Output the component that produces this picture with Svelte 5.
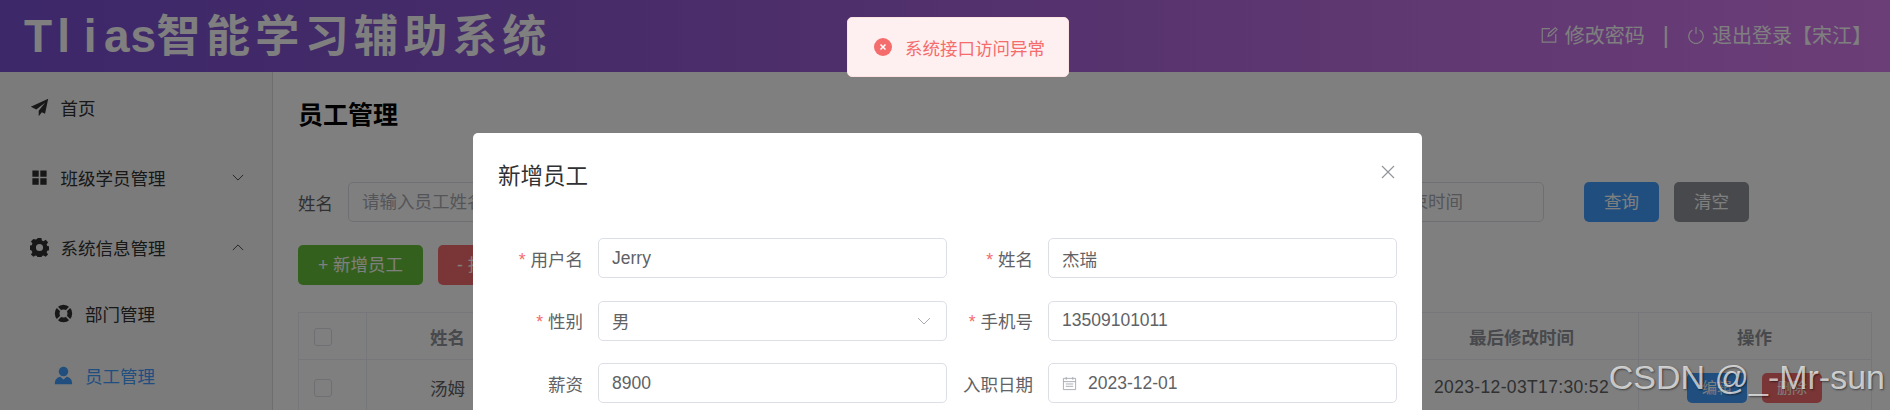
<script>
  const subMenu = [
    { label: "部门管理", icon: "help" },
    { label: "员工管理", icon: "avatar", active: true }
  ];
  const formRows = [
    { label: "用户名", required: true, value: "Jerry" },
    { label: "姓名", required: true, value: "杰瑞" },
    { label: "性别", required: true, value: "男", type: "select" },
    { label: "手机号", required: true, value: "13509101011" },
    { label: "薪资", value: "8900" },
    { label: "入职日期", value: "2023-12-01", type: "date" }
  ];
</script>

{#snippet menuIcon(name)}
  <svg class="menu-icon" viewBox="0 0 24 24" fill="currentColor" aria-hidden="true">
    {#if name === "plane"}
      <path d="M23 1 1 11l7 3.500L19 6l-8 10v7l4-5 4 2z" />
    {:else if name === "grid"}
      <path d="M3 3h8v8H3zM13 3h8v8h-8zM3 13h8v8H3zM13 13h8v8h-8z" />
    {:else if name === "setting"}
      <path fill-rule="evenodd" d="M9.600 0h4.800l.7 3.200 1.900.8 2.800-1.700 3 3-1.800 2.800.8 1.900 3.200.7v4.600l-3.200.7-.8 1.900 1.800 2.800-3 3-2.800-1.700-1.900.8-.7 3.200H9.600l-.7-3.200-1.900-.8-2.800 1.700-3-3 1.800-2.800-.8-1.900L-1 14.300V9.700l3.200-.7.8-1.900-1.800-2.800 3-3L7 2l1.900-.8zM12 7.500a4.500 4.500 0 1 0 0 9 4.500 4.500 0 0 0 0-9z" />
    {:else if name === "help"}
      <path fill-rule="evenodd" d="M12 1a11 11 0 1 1 0 22 11 11 0 0 1 0-22zm0 6a5 5 0 1 0 0 10 5 5 0 0 0 0-10z" />
      <path d="M3 3l5.500 5.500M21 3l-5.500 5.500M3 21l5.500-5.500M21 21l-5.500-5.500" stroke="#f7f7f7" stroke-width="2" />
    {:else if name === "avatar"}
      <circle cx="12" cy="7" r="6" />
      <path d="M8 13.500 12 17l4-3.500c4 1 7 3 7 9.500H1c0-6.500 3-8.500 7-9.500z" />
    {/if}
  </svg>
{/snippet}

{#snippet chevron(up)}
  <svg class="chevron" viewBox="0 0 14 8" fill="none" stroke="currentColor" stroke-width="1" aria-hidden="true">
    {#if up}
      <path d="M1 7l6-6 6 6" />
    {:else}
      <path d="M1 1l6 6 6-6" />
    {/if}
  </svg>
{/snippet}

<div class="page">
  <header class="topbar">
    <div class="brand">{#each "Tlias" as letter}<span class="brand-latin">{letter}</span>{/each}智能学习辅助系统</div>
    <div class="tools">
      <svg class="tool-icon" viewBox="0 0 20 20" fill="none" stroke="currentColor" stroke-width="1.300" aria-hidden="true">
        <path d="M11 3H2.500v15h15V9M9 11.500 10 8l7-6 2 2-7 6.500z" />
      </svg>
      <span>修改密码</span>
      <span class="sep">|</span>
      <svg class="tool-icon" viewBox="0 0 20 20" fill="none" stroke="currentColor" stroke-width="1.300" aria-hidden="true">
        <path d="M6 4.500a8 8 0 1 0 8 0M10 1v8" />
      </svg>
      <span>退出登录【宋江】</span>
    </div>
  </header>

  <div class="body">
    <aside class="aside">
      <div class="menu-item">{@render menuIcon("plane")}<span>首页</span></div>
      <div class="menu-item">{@render menuIcon("grid")}<span>班级学员管理</span>{@render chevron(false)}</div>
      <div class="menu-item">{@render menuIcon("setting")}<span>系统信息管理</span>{@render chevron(true)}</div>
      {#each subMenu as item}
        <div class="menu-sub" class:active={item.active}>{@render menuIcon(item.icon)}<span>{item.label}</span></div>
      {/each}
    </aside>

    <main class="main">
      <h1 class="title">员工管理</h1>

      <div class="search">
        <span class="search-label">姓名</span>
        <div class="search-input"><span class="placeholder">请输入员工姓名</span></div>
        <div class="search-range"><span class="placeholder">开始时间</span><span>至</span><span class="placeholder">结束时间</span></div>
        <button class="btn btn-primary btn-query">查询</button>
        <button class="btn btn-info">清空</button>
      </div>

      <div class="actions">
        <button class="btn btn-success">+ 新增员工</button>
        <button class="btn btn-danger">- 批量删除</button>
      </div>

      <table class="table">
        <colgroup>
          <col style="width: 68px" />
          <col style="width: 162px" />
          <col />
          <col style="width: 233px" />
          <col style="width: 233px" />
        </colgroup>
        <thead>
          <tr>
            <th class="cell-check"><span class="check"></span></th>
            <th>姓名</th>
            <th></th>
            <th>最后修改时间</th>
            <th>操作</th>
          </tr>
        </thead>
        <tbody>
          <tr>
            <td class="cell-check"><span class="check"></span></td>
            <td>汤姆</td>
            <td></td>
            <td class="cell-time">2023-12-03T17:30:52</td>
            <td>
              <div class="row-actions">
                <button class="btn btn-primary btn-small">编辑</button>
                <button class="btn btn-danger btn-small">删除</button>
              </div>
            </td>
          </tr>
        </tbody>
      </table>
    </main>
  </div>

  <div class="mask">
    <section class="dialog">
      <div class="dialog-head">
        <span>新增员工</span>
        <svg class="dialog-close" viewBox="0 0 14 14" fill="none" stroke="currentColor" stroke-width="1.100" aria-hidden="true">
          <path d="M1 1l12 12M13 1 1 13" />
        </svg>
      </div>
      <div class="form">
        {#each formRows as row}
          <div class="form-item">
            <span class="form-label" class:required={row.required}>{row.label}</span>
            <div class="field">
              {#if row.type === "date"}
                <svg class="date-icon" viewBox="0 0 16 16" fill="none" stroke="currentColor" stroke-width="1" aria-hidden="true">
                  <path d="M1.500 2.500h13v12h-13zM1.500 6h13M4.500 1v3M11.500 1v3M4 8.500h8M4 11h8" />
                </svg>
              {/if}
              <span>{row.value}</span>
              {#if row.type === "select"}
                <svg class="select-arrow" viewBox="0 0 14 8" fill="none" stroke="currentColor" stroke-width="1" aria-hidden="true">
                  <path d="M1 1l6 6 6-6" />
                </svg>
              {/if}
            </div>
          </div>
        {/each}
      </div>
    </section>
  </div>

  <div class="message">
    <svg class="message-icon" viewBox="0 0 18 18" aria-hidden="true">
      <circle cx="9" cy="9" r="9" fill="#f56c6c" />
      <path d="M6.500 6.500l5 5M11.500 6.500l-5 5" stroke="#fff" stroke-width="1.500" />
    </svg>
    <span>系统接口访问异常</span>
  </div>

  <div class="watermark">CSDN @_-Mr-sun</div>
</div>

<style>
  :global(body) {
    margin: 0;
  }

  .page {
    position: relative;
    height: 410px;
    overflow: hidden;
    background: #fff;
    font-family: "Liberation Sans", "Noto Sans CJK SC", sans-serif;
    font-size: 17.5px;
    color: #606266;
  }

  .topbar {
    display: flex;
    align-items: center;
    justify-content: space-between;
    height: 72px;
    padding: 0 18px 0 24px;
    background: linear-gradient(to right, #7a50d4, #9058d2 33%, #b86ce0 67%, #d87cf0);
    color: #fff;
  }

  .brand {
    font-size: 44px;
    font-weight: 700;
    letter-spacing: 5.400px;
    line-height: 70px;
    white-space: nowrap;
  }

  .brand-latin {
    display: inline-block;
    width: 26.500px;
    font-size: 46px;
    letter-spacing: 0;
    text-align: center;
  }

  .tools {
    display: flex;
    align-items: center;
    padding-bottom: 3px;
    font-size: 20px;
  }

  .tool-icon {
    width: 18px;
    height: 18px;
    margin-right: 7px;
  }

  .sep {
    margin: 0 18px 0 18px;
    font-size: 24px;
    line-height: 24px;
  }

  .body {
    display: flex;
    height: 338px;
  }

  .aside {
    flex: none;
    width: 272px;
    background: #f7f7f7;
    border-right: 1px solid #dcdcdc;
    color: #303133;
  }

  .menu-item {
    display: flex;
    align-items: center;
    height: 70px;
    padding: 0 25px 0 29.500px;
  }

  .menu-item span,
  .menu-sub span {
    flex: 1;
  }

  .menu-sub {
    display: flex;
    align-items: center;
    height: 62.500px;
    padding: 0 25px 0 54px;
  }

  .menu-sub.active {
    color: #409eff;
  }

  .menu-icon {
    flex: none;
    width: 19px;
    height: 19px;
    margin-right: 12px;
  }

  .chevron {
    flex: none;
    width: 12px;
    height: 7px;
    margin-right: 3px;
  }

  .main {
    flex: 1;
    min-width: 0;
    padding: 0 18.500px 0 25px;
  }

  .title {
    margin: 0;
    padding-top: 27px;
    font-size: 25px;
    line-height: 32px;
    color: #000;
  }

  .search {
    display: flex;
    align-items: center;
    margin-top: 51px;
  }

  .search-label {
    width: 50px;
  }

  .search-input,
  .search-range {
    box-sizing: border-box;
    height: 40px;
    border: 1px solid #dcdfe6;
    border-radius: 5px;
    background: #fff;
  }

  .search-input {
    width: 250px;
    padding: 0 13px;
    line-height: 38px;
  }

  .search-range {
    display: flex;
    align-items: center;
    justify-content: space-between;
    width: 495px;
    margin-left: 451px;
    padding: 0 80px;
    line-height: 38px;
  }

  .placeholder {
    color: #a8abb2;
  }

  .btn {
    box-sizing: border-box;
    height: 40px;
    padding: 0 0 4px;
    border: none;
    border-radius: 5px;
    color: #fff;
    font: inherit;
  }

  .btn-query {
    margin-left: 40px;
    margin-right: 15px;
  }

  .search .btn {
    width: 75px;
  }

  .btn-primary {
    background: #409eff;
  }

  .btn-info {
    background: #909399;
  }

  .btn-success {
    background: #67c23a;
  }

  .btn-danger {
    background: #f56c6c;
  }

  .actions {
    display: flex;
    gap: 15px;
    margin-top: 23px;
  }

  .actions .btn {
    padding: 0 19px 4px;
  }

  .actions .btn-success {
    width: 125px;
    padding: 0 0 4px;
  }

  .table {
    width: 100%;
    margin-top: 27px;
    border-collapse: collapse;
    table-layout: fixed;
    text-align: center;
  }

  th,
  td {
    border: 1px solid #ebeef5;
    padding: 0;
  }

  th {
    height: 46px;
    color: #909399;
    font-weight: 700;
  }

  td {
    height: 55px;
    color: #606266;
  }

  .cell-check {
    padding-left: 15px;
    text-align: left;
  }

  .cell-time {
    letter-spacing: 0.35px;
  }

  .check {
    display: inline-block;
    box-sizing: border-box;
    width: 18px;
    height: 18px;
    border: 1px solid #dcdfe6;
    border-radius: 3px;
    background: #fff;
    vertical-align: middle;
  }

  .row-actions {
    display: flex;
    justify-content: center;
    gap: 15px;
  }

  .btn-small {
    width: 60px;
    height: 30px;
    padding: 0 0 2px;
    font-size: 15px;
  }

  .mask {
    position: absolute;
    inset: 0;
    padding: 133px 468px 0 473px;
    background: rgba(0, 0, 0, 0.5);
  }

  .dialog {
    height: 100%;
    border-radius: 5px 5px 0 0;
    background: #fff;
  }

  .dialog-head {
    display: flex;
    align-items: center;
    justify-content: space-between;
    height: 72px;
    padding: 10px 27px 0 25px;
    box-sizing: border-box;
    font-size: 22.500px;
    color: #303133;
  }

  .dialog-close {
    width: 14px;
    height: 14px;
    margin-top: -4px;
    color: #909399;
  }

  .form {
    display: grid;
    grid-template-columns: 1fr 1fr;
    column-gap: 1px;
    row-gap: 22.500px;
    padding: 33px 25px 0;
  }

  .form-item {
    display: flex;
    align-items: center;
  }

  .form-label {
    flex: none;
    box-sizing: border-box;
    width: 100px;
    padding-right: 15px;
    text-align: right;
  }

  .form-label.required::before {
    content: "*";
    margin-right: 5px;
    color: #f56c6c;
  }

  .field {
    flex: 1;
    display: flex;
    align-items: center;
    box-sizing: border-box;
    height: 40px;
    padding: 0 13px;
    border: 1px solid #dcdfe6;
    border-radius: 5px;
  }

  .field span {
    flex: 1;
  }

  .select-arrow {
    width: 14px;
    height: 8px;
    margin-right: 2px;
    color: #a8abb2;
  }

  .date-icon {
    flex: none;
    width: 15px;
    height: 17px;
    margin-right: 11px;
    color: #a8abb2;
  }

  .message {
    position: absolute;
    top: 17px;
    left: 847px;
    display: flex;
    align-items: center;
    gap: 13px;
    box-sizing: border-box;
    width: 222px;
    height: 60px;
    padding-left: 26px;
    border: 1px solid #fde2e2;
    border-radius: 5px;
    background: #fef0f0;
    color: #f56c6c;
  }

  .message-icon {
    width: 18px;
    height: 18px;
  }

  .watermark {
    position: absolute;
    right: 5px;
    bottom: 13px;
    font-size: 34px;
    color: rgba(255, 255, 255, 0.7);
    text-shadow: 1px 1px 2px rgba(0, 0, 0, 0.5);
  }
</style>
